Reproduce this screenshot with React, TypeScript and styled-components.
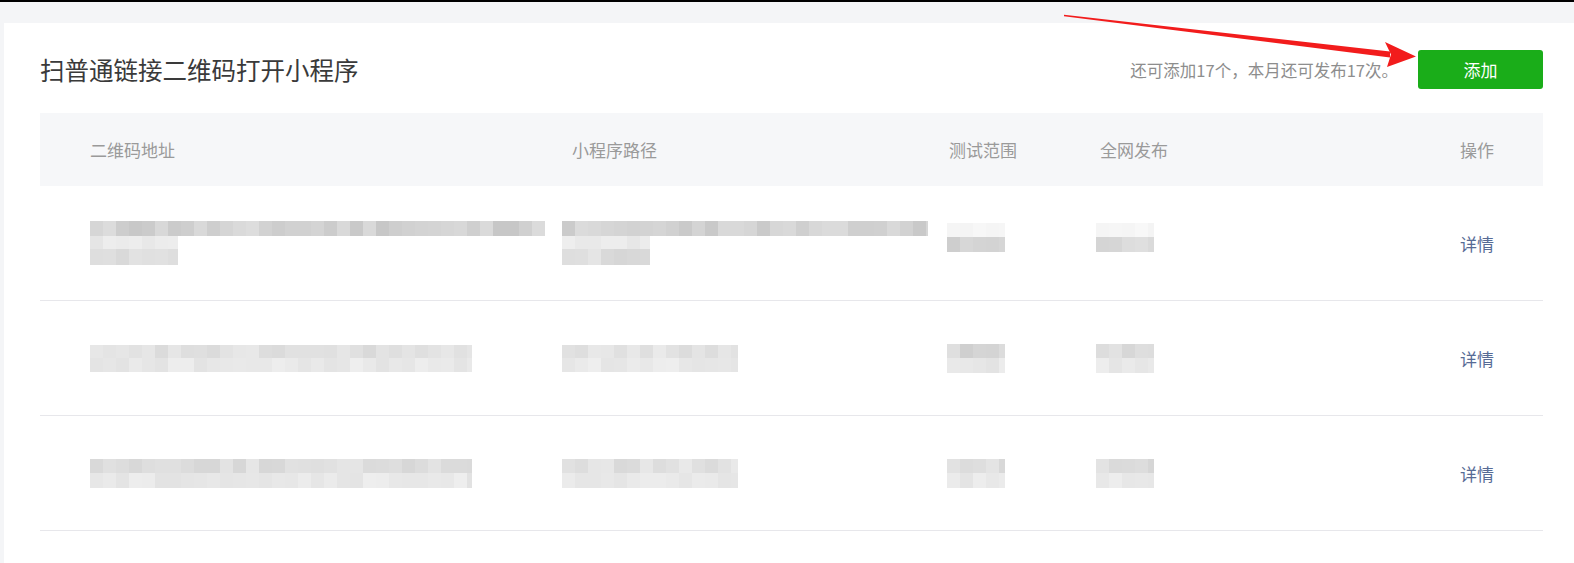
import React from 'react';
import styled, { createGlobalStyle } from 'styled-components';

type MosaicRow = { h: number; w: number; lo: number; hi: number };

type RecordRow = {
  qr: MosaicRow[];
  path: MosaicRow[];
  test: MosaicRow[];
  release: MosaicRow[];
};

const GlobalStyle = createGlobalStyle`
  html, body {
    margin: 0;
    padding: 0;
  }
  body {
    background: #f4f5f7;
    font-family: "Noto Sans CJK SC", "Noto Sans", "Liberation Sans", sans-serif;
  }
`;

const Page = styled.div`
  position: relative;
  min-height: 563px;
  box-sizing: border-box;
  border-top: 2px solid #000;
  padding: 21px 0 0 4px;
  overflow: hidden;
`;

const Card = styled.div`
  background: #fff;
  min-height: 560px;
  padding: 27px 31px 40px 36px;
  box-sizing: border-box;
`;

const TitleBar = styled.div`
  display: flex;
  align-items: center;
  justify-content: space-between;
  height: 39px;
`;

const Title = styled.h2`
  margin: 0;
  font-size: 24.5px;
  font-weight: 400;
  color: #3a3a3a;
`;

const Actions = styled.div`
  display: flex;
  align-items: center;
  gap: 20px;
`;

const Quota = styled.span`
  font-size: 16.5px;
  color: #8d8d8d;
`;

const AddButton = styled.button`
  width: 125px;
  height: 39px;
  border: 0;
  border-radius: 3px;
  background: #1aad19;
  color: #fff;
  font-family: inherit;
  font-size: 17px;
  cursor: pointer;
`;

const Table = styled.div`
  margin-top: 24px;
`;

const Row = styled.div<{ $head?: boolean }>`
  display: grid;
  grid-template-columns: 482px 377px 151px 1fr 83px;
  align-items: center;
  box-sizing: border-box;
  padding-left: 50px;
  height: ${(p) => (p.$head ? '73px' : '115px')};
  background: ${(p) => (p.$head ? '#f6f7f9' : '#fff')};
  border-bottom: ${(p) => (p.$head ? '0' : '1px solid #e7e7eb')};
  font-size: 17px;
  color: #9a9a9a;
`;

const Link = styled.a`
  color: #576b95;
  text-decoration: none;
  cursor: pointer;
`;

const MosaicBox = styled.svg<{ $shift: number }>`
  display: block;
  margin-left: ${(p) => p.$shift}px;
  shape-rendering: crispEdges;
`;

const ArrowLayer = styled.svg`
  position: absolute;
  left: 0;
  top: 0;
  pointer-events: none;
`;

// deterministic shades so the blurred cells look the same every run
const makeRandom = (seed: number) => {
  let s = seed;
  return () => {
    s = (s * 9301 + 49297) % 233280;
    return s / 233280;
  };
};

const hex = (v: number) => {
  const c = Math.round(v).toString(16).padStart(2, '0');
  return `#${c}${c}${c}`;
};

const Mosaic: React.FC<{ rows: MosaicRow[]; seed: number; shift?: number }> = ({
  rows,
  seed,
  shift = 0,
}) => {
  const rnd = makeRandom(seed);
  const width = Math.max(...rows.map((r) => r.w));
  const height = rows.reduce((sum, r) => sum + r.h, 0);
  const cells: React.ReactNode[] = [];
  let y = 0;
  rows.forEach((r, ri) => {
    for (let x = 0; x < r.w; x += 13) {
      cells.push(
        <rect
          key={`${ri}-${x}`}
          x={x}
          y={y}
          width={Math.min(13, r.w - x)}
          height={r.h}
          fill={hex(r.lo + rnd() * (r.hi - r.lo))}
        />
      );
    }
    y += r.h;
  });
  return (
    <MosaicBox $shift={shift} width={width} height={height}>
      {cells}
    </MosaicBox>
  );
};

const records: RecordRow[] = [
  {
    qr: [
      { h: 15, w: 455, lo: 0xc6, hi: 0xde },
      { h: 13, w: 88, lo: 0xe4, hi: 0xef },
      { h: 16, w: 88, lo: 0xd4, hi: 0xe4 },
    ],
    path: [
      { h: 15, w: 366, lo: 0xc8, hi: 0xdc },
      { h: 13, w: 88, lo: 0xe6, hi: 0xf0 },
      { h: 16, w: 88, lo: 0xd6, hi: 0xe6 },
    ],
    test: [
      { h: 14, w: 58, lo: 0xf0, hi: 0xf7 },
      { h: 15, w: 58, lo: 0xc8, hi: 0xd8 },
      { h: 11, w: 0, lo: 0xff, hi: 0xff },
    ],
    release: [
      { h: 14, w: 58, lo: 0xf4, hi: 0xfa },
      { h: 15, w: 58, lo: 0xd0, hi: 0xe0 },
      { h: 11, w: 0, lo: 0xff, hi: 0xff },
    ],
  },
  {
    qr: [
      { h: 13, w: 382, lo: 0xd8, hi: 0xe8 },
      { h: 14, w: 382, lo: 0xe2, hi: 0xee },
    ],
    path: [
      { h: 13, w: 176, lo: 0xdc, hi: 0xea },
      { h: 14, w: 176, lo: 0xe4, hi: 0xee },
    ],
    test: [
      { h: 14, w: 58, lo: 0xcc, hi: 0xe4 },
      { h: 15, w: 58, lo: 0xe2, hi: 0xee },
    ],
    release: [
      { h: 14, w: 58, lo: 0xd2, hi: 0xe4 },
      { h: 15, w: 58, lo: 0xe4, hi: 0xee },
    ],
  },
  {
    qr: [
      { h: 14, w: 382, lo: 0xd6, hi: 0xe6 },
      { h: 15, w: 382, lo: 0xe2, hi: 0xee },
    ],
    path: [
      { h: 14, w: 176, lo: 0xd8, hi: 0xea },
      { h: 15, w: 176, lo: 0xe4, hi: 0xee },
    ],
    test: [
      { h: 14, w: 58, lo: 0xcc, hi: 0xe4 },
      { h: 15, w: 58, lo: 0xe2, hi: 0xee },
    ],
    release: [
      { h: 14, w: 58, lo: 0xd4, hi: 0xe4 },
      { h: 15, w: 58, lo: 0xe4, hi: 0xee },
    ],
  },
];

const App: React.FC = () => {
  return (
    <Page>
      <GlobalStyle />
      <Card>
        <TitleBar>
          <Title>扫普通链接二维码打开小程序</Title>
          <Actions>
            <Quota>还可添加17个，本月还可发布17次。</Quota>
            <AddButton>添加</AddButton>
          </Actions>
        </TitleBar>
        <Table>
          <Row $head>
            <span>二维码地址</span>
            <span>小程序路径</span>
            <span>测试范围</span>
            <span>全网发布</span>
            <span>操作</span>
          </Row>
          {records.map((r, i) => (
            <Row key={i}>
              <Mosaic rows={r.qr} seed={11 + i * 7} />
              <Mosaic rows={r.path} seed={23 + i * 5} shift={-10} />
              <Mosaic rows={r.test} seed={37 + i * 3} shift={-2} />
              <Mosaic rows={r.release} seed={51 + i * 9} shift={-4} />
              <Link>详情</Link>
            </Row>
          ))}
        </Table>
      </Card>
      <ArrowLayer width="1574" height="100" viewBox="0 0 1574 100">
        <polygon points="1064,12.8 1390,49.5 1390,55.5 1064,14.2" fill="#f21c1c" />
        <polygon points="1385,40 1416,54.5 1387,65 1391,52.5" fill="#f21c1c" />
      </ArrowLayer>
    </Page>
  );
};

export default App;
